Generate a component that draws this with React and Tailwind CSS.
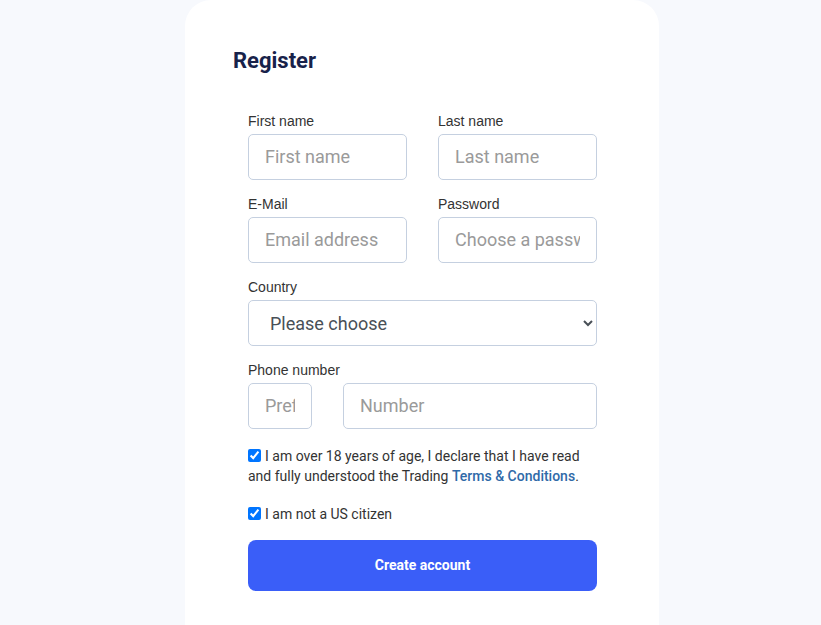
import React from "react";

const baseInput =
  "block h-[46px] rounded-[5px] border border-[#c5d0e0] bg-white px-4 text-[18px] leading-[22px] text-[#495057] placeholder:text-[#9a9a9a] outline-none font-['Roboto',sans-serif] min-w-0";
const labelCls =
  "block text-[14px] leading-[20px] text-[#333] mb-[3px] font-['Liberation_Sans',Arial,sans-serif]";

function Field({ label, placeholder, type = "text" }) {
  return (
    <div>
      <label className={labelCls}>{label}</label>
      <input type={type} placeholder={placeholder} className={baseInput + " w-full pb-[2px]"} />
    </div>
  );
}

export default function App() {
  return (
    <div className="min-h-[625px] bg-[#f7f9fd] flex justify-center pl-[23px] font-['Roboto',sans-serif]">
      <div className="w-[474px] min-h-[625px] bg-white rounded-t-[26px] pt-[47px] pl-[48px] pr-[62px]">
        <h1 className="text-[22px] leading-[28px] font-bold text-[#18224a] font-['Roboto',sans-serif]">
          Register
        </h1>
        <div className="pl-[15px] pt-[36px]">
          <div className="grid grid-cols-2 gap-x-[31px] gap-y-[14px]">
            <Field label="First name" placeholder="First name" />
            <Field label="Last name" placeholder="Last name" />
            <Field label="E-Mail" placeholder="Email address" type="email" />
            <Field label="Password" placeholder="Choose a password" type="password" />
          </div>
          <div className="mt-[14px]">
            <label className={labelCls}>Country</label>
            <select className={baseInput + " w-full pl-[17px] pr-[8px]"} defaultValue="">
              <option value="">Please choose</option>
            </select>
          </div>
          <div className="mt-[14px]">
            <label className={labelCls}>Phone number</label>
            <div className="flex gap-[31px]">
              <input placeholder="Prefix" className={baseInput + " w-[64px] shrink-0 pb-[2px]"} />
              <input placeholder="Number" className={baseInput + " flex-1 pb-[2px]"} />
            </div>
          </div>
          <div className="mt-[17px] text-[14px] leading-[20px] text-[#333]">
            <input type="checkbox" defaultChecked className="m-0 mr-[4px] w-[13px] h-[13px] align-[-1px]" />
            I am over 18 years of age, I declare that I have read and fully understood the Trading{" "}
            <a className="text-[#2f6aa8] font-medium">Terms &amp; Conditions</a>.
          </div>
          <div className="mt-[18px] text-[14px] leading-[20px] text-[#333]">
            <input type="checkbox" defaultChecked className="m-0 mr-[4px] w-[13px] h-[13px] align-[-1px]" />
            I am not a US citizen
          </div>
          <button className="mt-[16px] w-full h-[51px] rounded-[8px] bg-[#3a5ef8] text-white text-[14px] font-bold">
            Create account
          </button>
        </div>
      </div>
    </div>
  );
}
